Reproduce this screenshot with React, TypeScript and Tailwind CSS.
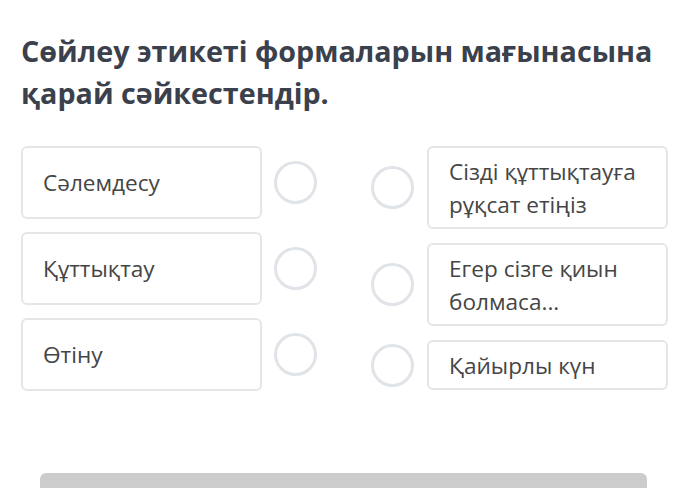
const leftItems = ["Сәлемдесу", "Құттықтау", "Өтіну"];

const rightItems = [
  { text: "Сізді құттықтауға рұқсат етіңіз", h: "h-[83px]" },
  { text: "Егер сізге қиын болмаса...", h: "h-[83px]" },
  { text: "Қайырлы күн", h: "h-[50px]" }
];

function Dot() {
  return <span className="block size-[43px] shrink-0 rounded-full border-[3px] border-[#e0e4e8]" />;
}

export default function App() {
  return (
    <div className="h-[488px] w-[685px] overflow-hidden bg-white" style={{ fontFamily: '"Open Sans", "Noto Sans", sans-serif' }}>
      <h1 className="px-[21px] pt-[30px] text-[28.7px] font-bold leading-[42px] text-[#3a414c]">
        Сөйлеу этикеті формаларын мағынасына қарай сәйкестендір.
      </h1>

      <div className="mt-[32px] flex px-[21px]">
        <div className="flex flex-col gap-[13px]">
          {leftItems.map((item) => (
            <div key={item} className="flex items-center gap-[12px]">
              <div className="flex h-[73px] w-[241px] items-center rounded-[6px] border-2 border-[#e6e6e6] px-[20px] text-[22.6px] leading-[32px] text-[#454545]">
                {item}
              </div>
              <Dot />
            </div>
          ))}
        </div>

        <div className="ml-[54px] flex flex-col gap-[14px]">
          {rightItems.map((item) => (
            <div key={item.text} className="flex items-center gap-[13px]">
              <Dot />
              <div className={`flex ${item.h} w-[241px] items-center rounded-[6px] border-2 border-[#e6e6e6] pl-[20px] pr-[12px] text-[22.6px] leading-[33px] text-[#454545]`}>
                {item.text}
              </div>
            </div>
          ))}
        </div>
      </div>

      <div className="ml-[40px] mr-[38px] mt-[82px] h-[40px] rounded-[6px] bg-[#cccccc]" />
    </div>
  );
}
